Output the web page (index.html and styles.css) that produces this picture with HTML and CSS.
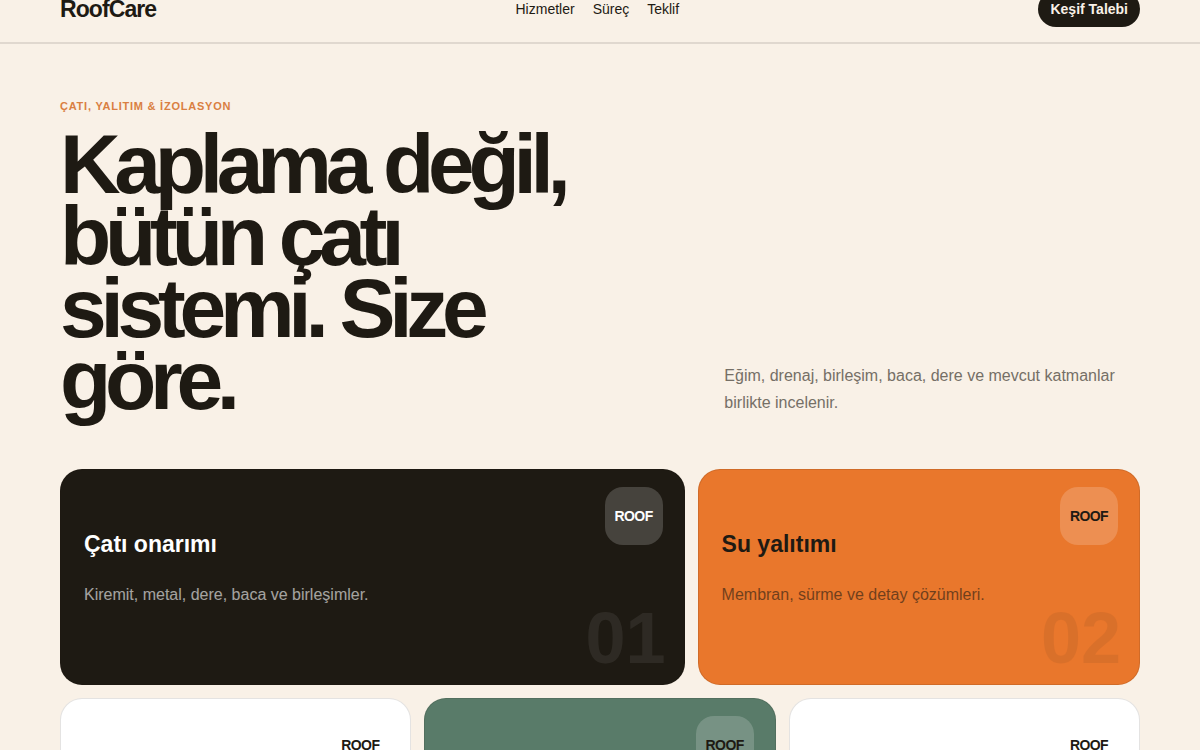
FILE: index.html
```html
<!DOCTYPE html>
<html lang="tr">
<head>
<meta charset="utf-8">
<meta name="viewport" content="width=device-width, initial-scale=1">
<title>RoofCare</title>
<link rel="stylesheet" href="styles.css">
</head>
<body>
<header class="header">
  <div class="wrap header-row">
    <a class="logo" href="#">RoofCare</a>
    <nav class="nav">
      <a href="#hizmetler">Hizmetler</a>
      <a href="#surec">Süreç</a>
      <a href="#teklif">Teklif</a>
    </nav>
    <a class="pill" href="#teklif">Keşif Talebi</a>
  </div>
</header>
<main class="wrap">
  <section class="hero">
    <div>
      <p class="eyebrow">ÇATI, YALITIM &amp; İZOLASYON</p>
      <h1 class="title">Kaplama değil, bütün çatı sistemi. Size göre.</h1>
    </div>
    <p class="lead">Eğim, drenaj, birleşim, baca, dere ve mevcut katmanlar birlikte incelenir.</p>
  </section>
  <section class="cards" id="hizmetler">
    <article class="card card-7 dark">
      <span class="badge">ROOF</span>
      <h2>Çatı onarımı</h2>
      <p>Kiremit, metal, dere, baca ve birleşimler.</p>
      <span class="number">01</span>
    </article>
    <article class="card card-5 orange">
      <span class="badge">ROOF</span>
      <h2>Su yalıtımı</h2>
      <p>Membran, sürme ve detay çözümleri.</p>
      <span class="number">02</span>
    </article>
    <article class="card"><span class="badge">ROOF</span></article>
    <article class="card green"><span class="badge">ROOF</span></article>
    <article class="card"><span class="badge">ROOF</span></article>
  </section>
</main>
</body>
</html>
```
FILE: styles.css
```css
* { box-sizing: border-box; }

body {
  margin: 0;
  height: 100vh;
  overflow: hidden;
  background: #f9f1e7;
  color: #1e1a13;
  font-family: "Liberation Sans", Arial, sans-serif;
  font-size: 16px;
}

a { color: inherit; text-decoration: none; }

.wrap { margin: 0 auto; padding: 0 5%; }

.header {
  margin-top: -24px;
  border-bottom: 2px solid #e0d8cf;
}

.header-row {
  display: flex;
  justify-content: space-between;
  align-items: center;
  padding-top: 15px;
  padding-bottom: 15px;
}

.logo { font-size: 23px; font-weight: 700; letter-spacing: -0.04em; }

.nav { display: flex; gap: 18px; font-size: 14px; }

.pill {
  padding: 10px 12px;
  border-radius: 18px;
  background: #1e1a13;
  color: #f9f1e7;
  font-size: 14px;
  font-weight: 700;
  line-height: 16px;
}

.hero {
  display: grid;
  grid-template-columns: 13fr 9fr;
  gap: 64px;
  align-items: end;
  padding: 56px 0 53px;
}

.eyebrow {
  margin: 0 0 16px;
  color: #d97f42;
  font-size: 11px;
  font-weight: 700;
  letter-spacing: 0.07em;
  line-height: 12px;
}

.title {
  margin: 0;
  font-size: 84px;
  letter-spacing: -0.075em;
  line-height: 72px;
}

.lead { margin: 0; color: #756f66; font-size: 16px; line-height: 27px; }

.cards {
  display: grid;
  grid-template-columns: repeat(12, 1fr);
  gap: 13px;
}

.card {
  position: relative;
  grid-column: span 4;
  min-height: 216px;
  padding: 60px 23px 24px;
  border: 1px solid rgba(30, 26, 19, 0.12);
  border-radius: 22px;
  background: #fff;
}

.card-7 { grid-column: span 7; }
.card-5 { grid-column: span 5; }

.card h2 { margin: 0 0 28px; font-size: 23px; line-height: 28px; }
.card p { margin: 0; font-size: 16px; line-height: 18px; opacity: 0.6; }

.dark { background: #1e1a13; color: #fff; }
.orange { background: #e9772c; }
.green { background: #597b69; }

.badge {
  position: absolute;
  top: 17px;
  right: 21px;
  display: grid;
  place-items: center;
  width: 58px;
  height: 58px;
  border-radius: 18px;
  background: rgba(255, 255, 255, 0.18);
  font-size: 14px;
  font-weight: 700;
  letter-spacing: -0.04em;
}

.number {
  position: absolute;
  right: 18px;
  bottom: 10px;
  font-size: 72px;
  font-weight: 700;
  line-height: 72px;
  opacity: 0.07;
}
```
